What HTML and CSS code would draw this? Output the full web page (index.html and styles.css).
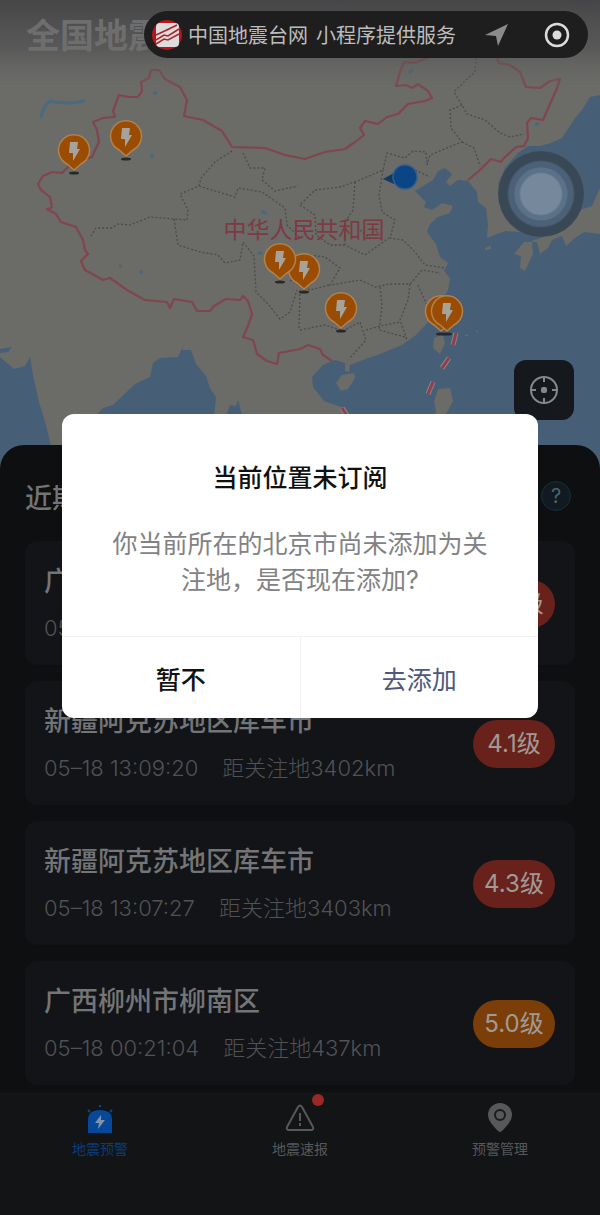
FILE: index.html
```html
<!DOCTYPE html>
<html lang="zh-CN">
<head>
    <meta charset="UTF-8">
    <meta name="viewport" content="width=device-width, initial-scale=1.0">
    <title>全国地震预警</title>
    <link rel="stylesheet" href="styles.css">
</head>
<body>

<div class="app">
    <header class="map-area">
        <svg class="map" viewBox="0 0 600 470" preserveAspectRatio="xMidYMin slice" role="img" aria-label="地震分布地图">
            <defs>
                <linearGradient id="topShade" x1="0" y1="0" x2="0" y2="1">
                    <stop offset="0" stop-color="#444446" stop-opacity="0.95"/>
                    <stop offset="0.5" stop-color="#525253" stop-opacity="0.75"/>
                    <stop offset="1" stop-color="#6b6b68" stop-opacity="0"/>
                </linearGradient>
                <!-- pin with its tip at 0,0 -->
                <g id="pin">
                    <ellipse cx="0" cy="2" rx="5" ry="1.5" fill="#26282a"/>
                    <path d="M0 -1 L-7 -7 A15.5 15.5 0 1 1 7 -7 Z" fill="#994c02" stroke="#b0834f" stroke-width="1.5"/>
                    <path d="M-4 -29 h8 l-1 7 h3 l-7 12 l0 -8 h-4 Z" fill="#a6a39d"/>
                </g>
            </defs>

            <rect width="600" height="470" fill="#6b6b68"/>

            <!-- seas and lakes -->
            <g fill="#475f76">
                <path d="M600 95 L590 97 L582 110 L575 118 L562 138 L551 143 L540 146 L528 146 L518 153 L505 168 L498 184 L510 200 L519 220 L520 232 L505 231 L487 238 L488 224 L486 208 L478 202 L477 192 L468 181 L458 180 L450 186 L446 182 L452 174 L445 168 L438 171 L433 180 L415 191 L426 202 L424 207 L432 210 L442 203 L453 206 L450 213 L438 217 L430 224 L427 232 L436 244 L440 257 L448 263 L444 271 L450 278 L448 290 L440 304 L430 320 L416 335 L402 345 L380 354 L360 361 L350 365 L349 372 L345 371 L345 363 L335 360 L323 365 L312 377 L313 387 L324 401 L344 408 L354 430 L366 470 L600 470 Z"/>
                <path d="M0 357 L14 369 L25 366 L30 357 L33 375 L39 402 L46 425 L52 450 L60 470 L0 470 Z"/>
                <path d="M94 418 L103 408 L113 405 L135 384 L150 377 L153 363 L160 358 L178 357 L184 344 L182 350 L191 350 L196 364 L206 376 L210 388 L216 397 L214 418 Z"/>
                <path d="M225 418 L230 405 L236 406 L238 400 L243 418 Z"/>
                <path d="M0 349 L12 347 L8 352 L0 353 Z"/>
                <path d="M572 0 L595 0 L598 6 L580 8 Z" opacity="0.5"/>
            </g>
            <path d="M41 117 Q43 107 50 101 Q66 105 84 101" fill="none" stroke="#496b80" stroke-width="3" stroke-linecap="round"/>
            <path d="M326 12 L340 0 M153 93 h4 M150 156 h4 M119 266 h3 M139 272 h4 M261 211 l6 3 M409 73 l4 -3 M535 124 h4 M258 254 l4 -2" fill="none" stroke="#4c6779" stroke-width="3"/>

            <!-- islands and Japan -->
            <g fill="#6b6b68">
                <path d="M600 188 L600 234 L584 232 L575 238 L566 246 L562 236 L552 240 L548 248 L540 254 L537 242 L524 242 L514 254 L521 256 L520 268 L525 271 L533 254 L532 241 L548 235 L562 224 L580 210 L592 206 Z"/>
                <path d="M336 383 L342 375 L354 373 L355 378 L348 389 L341 391 Z"/>
                <path d="M434 338 L443 334 L445 343 L440 354 L433 348 Z"/>
                <path d="M438 389 L450 388 L453 401 L446 414 L450 425 L432 430 L436 410 L434 402 Z"/>
                <path d="M485 248 l6 -2 v3 l-6 1 Z M464 336 l4 -2 v2 Z M475 330 l3 1 v2 Z"/>
            </g>

            <!-- province borders -->
            <g class="province">
                <path d="M232 151 L215 162 L201 178 L199 186 L180 194 L188 210 L187 220 L174 219 L150 217 L130 225 L118 224 L112 228 L96 228 L91 236"/>
                <path d="M243 153 L250 168 L265 168 L262 180 L275 191 L298 186"/>
                <path d="M199 186 L235 197 L238 188 L262 192 L285 208 L287 225 L300 238"/>
                <path d="M174 219 L178 245 L200 252 L218 255 L225 263 L240 260 L243 242 L254 256 L256 292 L268 304 L280 319 L290 312 L297 290"/>
                <path d="M476 58 L475 72 L464 82 L454 92 L462 105 L467 114 L485 120 L500 133 L510 137 L524 134"/>
                <path d="M462 105 L450 110 L451 128 L462 142 L430 155 L427 165 L426 152 L413 151 L405 158 L387 153 L383 170 L360 180 L340 187 L315 190 L300 205"/>
                <path d="M462 142 L474 148 L480 166"/>
                <path d="M383 170 L379 195 L382 212 L395 220 L390 238 L403 240 L415 252 L425 265 L445 268"/>
                <path d="M355 182 L353 210 L345 222 L345 245 L365 255 L389 238"/>
                <path d="M300 205 L315 215 L316 235 L330 245 L345 245"/>
                <path d="M310 255 L325 257 L340 268 L330 285 L360 280 L375 287 L390 284 L410 284 L422 270 L440 273"/>
                <path d="M380 287 L382 305 L379 330 L405 337"/>
                <path d="M410 284 L408 300 L400 320 L407 340"/>
                <path d="M300 330 L325 325 L343 331 L360 322 L366 340 L350 358"/>
                <path d="M366 330 L380 326 L400 322 M418 285 L427 305 M360 230 L372 240 M415 170 L430 177 M290 280 L310 290 L330 285 M300 290 L299 330"/>
            </g>

            <!-- national border -->
            <g class="border">
                <path d="M52 208 L50 197 L41 190 L38 184 L43 176 L52 172 L62 173 L68 167 L78 161 L92 157 L96 148 L99 142 L97 130 L93 122 L103 118 L115 117 L113 111 L119 95 L128 97 L138 97 L142 91 L141 82 L149 78 L151 70 L159 70 L165 79 L180 87 L187 100 L184 116 L203 120 L222 131 L232 147 L265 148 L285 155 L305 159 L325 152 L345 149 L355 142 L364 135 L360 128 L365 121 L378 124 L387 117 L398 114 L408 104 L425 101 L432 98 L428 91 L418 84 L412 88 L406 85 L396 86 L400 72 L404 62 L414 63 L430 57"/>
                <path d="M495 52 L499 63 L510 65 L520 72 L526 87 L540 88 L550 81 L560 79 L557 88 L550 104 L543 120 L531 118 L527 123 L528 138 L524 146 L516 147 L503 159 L501 162 L491 159 L480 170 L468 180"/>
                <path d="M52 208 L47 209 L56 214 L61 222 L76 227 L83 240 L85 250 L88 254 L81 261 L85 270 L103 280 L110 278 L127 290 L145 300 L167 302 L170 308 L174 299 L192 302 L197 311 L210 311 L214 306 L226 299 L240 300 L243 296 L248 301 L252 314 L248 326 L243 337 L253 340 L257 354 L267 361 L277 364 L279 353 L300 349 L308 345 L320 349 L323 355 L332 361"/>
            </g>
            <g fill="none">
                <path d="M456 333 L453 345 M449 358 L442 368 M433 382 L428 394 M342 408 L350 420" stroke="#8a8384" stroke-width="5"/>
                <path d="M456 333 L453 345 M449 358 L442 368 M433 382 L428 394 M342 408 L350 420" stroke="#8e3f4a" stroke-width="3"/>
            </g>

            <rect width="600" height="95" fill="url(#topShade)"/>

            <text class="map-label" x="304" y="238" text-anchor="middle">中华人民共和国</text>

            <!-- current location -->
            <path d="M383 179 L394 173 V184 Z" fill="#12395f"/>
            <circle cx="405" cy="177" r="12" fill="#0c4586" stroke="#315f8b" stroke-width="1.5"/>

            <use href="#pin" x="74" y="171"/>
            <use href="#pin" x="126" y="157"/>
            <use href="#pin" x="304" y="290"/>
            <use href="#pin" x="280" y="280"/>
            <use href="#pin" x="341" y="329"/>
            <use href="#pin" x="441" y="332"/>
            <use href="#pin" x="447" y="332"/>
        </svg>

        <h1 class="page-title">全国地震预警</h1>

        <button class="locate-btn" type="button" aria-label="定位">
            <svg viewBox="0 0 30 30" width="30" height="30" fill="none" stroke="#85888b" stroke-width="2">
                <circle cx="15" cy="15" r="13"/>
                <path d="M15 2 V7 M15 23 V28 M2 15 H7 M23 15 H28"/>
                <rect x="13" y="13" width="4" height="4" rx="1" fill="#85888b"/>
            </svg>
        </button>
    </header>

    <main class="sheet">
        <div class="sheet-head">
            <h2>近期地震</h2>
            <button class="help-btn" type="button" aria-label="帮助">?</button>
        </div>

        <ul class="quake-list">
            <li class="quake">
                <div class="quake-info">
                    <h3>广西柳州市柳南区</h3>
                    <p><span>05–18</span></p>
                </div>
                <span class="level red">3.3级</span>
            </li>
            <li class="quake">
                <div class="quake-info">
                    <h3>新疆阿克苏地区库车市</h3>
                    <p><time>05–18 13:09:20</time><span>距关注地3402km</span></p>
                </div>
                <span class="level red">4.1级</span>
            </li>
            <li class="quake">
                <div class="quake-info">
                    <h3>新疆阿克苏地区库车市</h3>
                    <p><time>05–18 13:07:27</time><span>距关注地3403km</span></p>
                </div>
                <span class="level red">4.3级</span>
            </li>
            <li class="quake">
                <div class="quake-info">
                    <h3>广西柳州市柳南区</h3>
                    <p><time>05–18 00:21:04</time><span>距关注地437km</span></p>
                </div>
                <span class="level orange">5.0级</span>
            </li>
        </ul>
    </main>

    <nav class="tabs">
        <a class="tab active" href="#">
            <svg viewBox="0 0 32 32" width="32" height="32">
                <path d="M4 31 V18 Q4 8 16 8 Q28 8 28 18 V31 Z" fill="#07489a"/>
                <path d="M16 3 V5 M4 8 L6 10 M28 8 L26 10" stroke="#07489a" stroke-width="2"/>
                <path d="M17 13 L11 21 H15 L14 27 L21 18 H17 Z" fill="#8194a8"/>
            </svg>
            地震预警
        </a>
        <a class="tab" href="#">
            <svg viewBox="0 0 32 32" width="32" height="32" fill="none" stroke="#56585a" stroke-width="2">
                <path d="M14 5 Q16 2 18 5 L29 25 Q30 28 27 28 H5 Q2 28 3 25 Z" stroke-linejoin="round"/>
                <path d="M16 11 V19 M16 21 V24"/>
            </svg>
            地震速报
            <span class="dot"></span>
        </a>
        <a class="tab" href="#">
            <svg viewBox="0 0 32 32" width="32" height="32">
                <path d="M16 30 Q14 30 7 21 Q4 17 4 13 A12 12 0 0 1 28 13 Q28 17 25 21 Q18 30 16 30 Z" fill="#56585a"/>
                <circle cx="16" cy="13" r="5" fill="#56585a" stroke="#191b1d" stroke-width="2"/>
            </svg>
            预警管理
        </a>
    </nav>

    <!-- mini program capsule -->
    <div class="capsule">
        <svg class="capsule-logo" viewBox="0 0 30 30" width="30" height="30">
            <circle cx="15" cy="15" r="15" fill="#b3161d"/>
            <rect x="4" y="3" width="23" height="24" rx="4" fill="#dedcdc"/>
            <path d="M4 15 Q13 11 25 5 M4 20 L12 15 L16 16 L27 9 M4 24 L12 19 L16 20 L27 14" fill="none" stroke="#a8252b" stroke-width="1.5"/>
        </svg>
        <span class="capsule-name"><span>中国地震台网</span><span>小程序提供服务</span></span>
        <svg class="capsule-nav" viewBox="0 0 24 24" width="24" height="24">
            <path d="M1 12 L24 1 L14 23 L12 13 Z" fill="#8b8b8b"/>
        </svg>
        <button class="close-btn" type="button" aria-label="关闭">
            <svg viewBox="0 0 26 26" width="26" height="26">
                <circle cx="13" cy="13" r="11" fill="none" stroke="#dcdcdc" stroke-width="2.5"/>
                <circle cx="13" cy="13" r="4.5" fill="#dcdcdc"/>
            </svg>
        </button>
    </div>

    <button class="touch-ball" type="button" aria-label="辅助触控"></button>

    <div class="overlay">
        <div class="dialog" role="dialog" aria-labelledby="dialogTitle">
            <div class="dialog-body">
                <h2 id="dialogTitle">当前位置未订阅</h2>
                <p>你当前所在的北京市尚未添加为关注地，是否现在添加?</p>
            </div>
            <div class="dialog-actions">
                <button type="button">暂不</button>
                <button type="button" class="confirm">去添加</button>
            </div>
        </div>
    </div>
</div>

</body>
</html>
```
FILE: styles.css
```css
* {
    box-sizing: border-box;
}

body {
    margin: 0;
    background-color: #0d0f11;
    font-family: Inter, 'Noto Sans CJK SC', sans-serif;
}

h1, h2, h3, p, ul {
    margin: 0;
    padding: 0;
}

button {
    font-family: inherit;
    border: none;
    padding: 0;
    cursor: pointer;
}

svg {
    display: block;
    flex-shrink: 0;
}

.app {
    position: relative;
    min-height: 100vh;
    display: flex;
    flex-direction: column;
}

/* Map */
.map-area {
    position: relative;
    height: 445px;
    padding: 12px 26px;
}

.map {
    position: absolute;
    top: 0;
    left: 0;
    width: 100%;
    height: 470px;
}

.province {
    fill: none;
    stroke: #4b4c4c;
    stroke-width: 1.3;
    stroke-dasharray: 2 2;
}

.border {
    fill: none;
    stroke: #81454f;
    stroke-width: 2.2;
    stroke-linejoin: round;
}

.map-label {
    font-size: 23px;
    fill: #7e3943;
}

.page-title {
    position: relative;
    font-size: 34px;
    line-height: 48px;
    font-weight: 700;
    color: #6e6e6e;
}

.locate-btn {
    position: absolute;
    right: 26px;
    bottom: 25px;
    width: 60px;
    height: 60px;
    display: flex;
    align-items: center;
    justify-content: center;
    border-radius: 12px;
    background-color: #15191d;
}

/* Sheet */
.sheet {
    position: relative;
    flex: 1;
    padding: 32px 25px 7px;
    border-radius: 24px 24px 0 0;
    background-color: #0d0f11;
}

.sheet-head {
    display: flex;
    align-items: center;
    justify-content: space-between;
    height: 38px;
    margin-bottom: 26px;
    padding-right: 4px;
}

.sheet-head h2 {
    font-size: 27px;
    font-weight: 500;
    color: #737476;
}

.help-btn {
    width: 30px;
    height: 30px;
    border: 1px solid #17303e;
    border-radius: 50%;
    background-color: #101a20;
    color: #4f6471;
    font-size: 20px;
}

.quake-list {
    list-style: none;
    display: flex;
    flex-direction: column;
    gap: 16px;
}

.quake {
    display: flex;
    align-items: center;
    justify-content: space-between;
    height: 124px;
    padding: 2px 20px 0 19px;
    border-radius: 12px;
    background-color: #121417;
}

.quake h3 {
    margin-bottom: 12px;
    font-size: 27px;
    line-height: 36px;
    font-weight: 500;
    color: #747577;
}

.quake p {
    display: flex;
    gap: 24px;
    font-size: 22px;
    line-height: 32px;
    font-weight: 300;
    color: #505255;
    white-space: nowrap;
}

.level {
    width: 82px;
    line-height: 48px;
    border-radius: 24px;
    text-align: center;
    font-size: 24px;
    color: #a09a95;
}

.red {
    background-color: #69211c;
}

.orange {
    background-color: #7c3e08;
}

/* Tabs */
.tabs {
    position: relative;
    display: flex;
    height: 123px;
    padding-top: 10px;
    background-color: #121416;
}

.tab {
    position: relative;
    flex: 1;
    display: flex;
    flex-direction: column;
    align-items: center;
    gap: 4px;
    font-size: 14px;
    line-height: 22px;
    color: #56585a;
    text-decoration: none;
}

.tab.active {
    color: #0b3d78;
}

.dot {
    position: absolute;
    top: -8px;
    left: calc(50% + 12px);
    width: 12px;
    height: 12px;
    border-radius: 50%;
    background-color: #9b2825;
}

/* Floating controls */
.capsule {
    position: absolute;
    top: 11px;
    right: 12px;
    display: flex;
    align-items: center;
    width: 444px;
    height: 47px;
    padding: 0 18px 0 8px;
    border-radius: 24px;
    background-color: #1e1e1e;
}

.capsule-name {
    display: flex;
    gap: 8px;
    margin-left: 6px;
    font-size: 20px;
    color: #bdbdbd;
    white-space: nowrap;
}

.capsule-nav {
    margin-left: auto;
}

.close-btn {
    margin-left: 36px;
    background: none;
}

.touch-ball {
    position: absolute;
    top: 151px;
    right: 16px;
    width: 86px;
    height: 86px;
    border-radius: 50%;
    background: radial-gradient(circle, #75889c 0 20px, #5b7187 22px 26px, #4c6177 27px 32px, #394856 34px 42px, #424b54 43px);
}

/* Dialog */
.overlay {
    position: absolute;
    top: 0;
    left: 0;
    right: 0;
    padding: 414px 62px 0;
}

.dialog {
    border-radius: 12px;
    background-color: #fff;
    text-align: center;
    overflow: hidden;
}

.dialog-body {
    padding: 46px 48px 38px;
}

.dialog h2 {
    margin-bottom: 30px;
    font-size: 25px;
    line-height: 36px;
    font-weight: 500;
    color: #111;
}

.dialog p {
    font-size: 25px;
    line-height: 36px;
    color: #828284;
}

.dialog-actions {
    display: flex;
    border-top: 1px solid #f2f2f2;
}

.dialog-actions button {
    flex: 1;
    height: 81px;
    background: none;
    font-size: 25px;
    font-weight: 500;
    color: #111;
}

.dialog-actions .confirm {
    border-left: 1px solid #f2f2f2;
    font-weight: 400;
    color: #4c587c;
}
```
